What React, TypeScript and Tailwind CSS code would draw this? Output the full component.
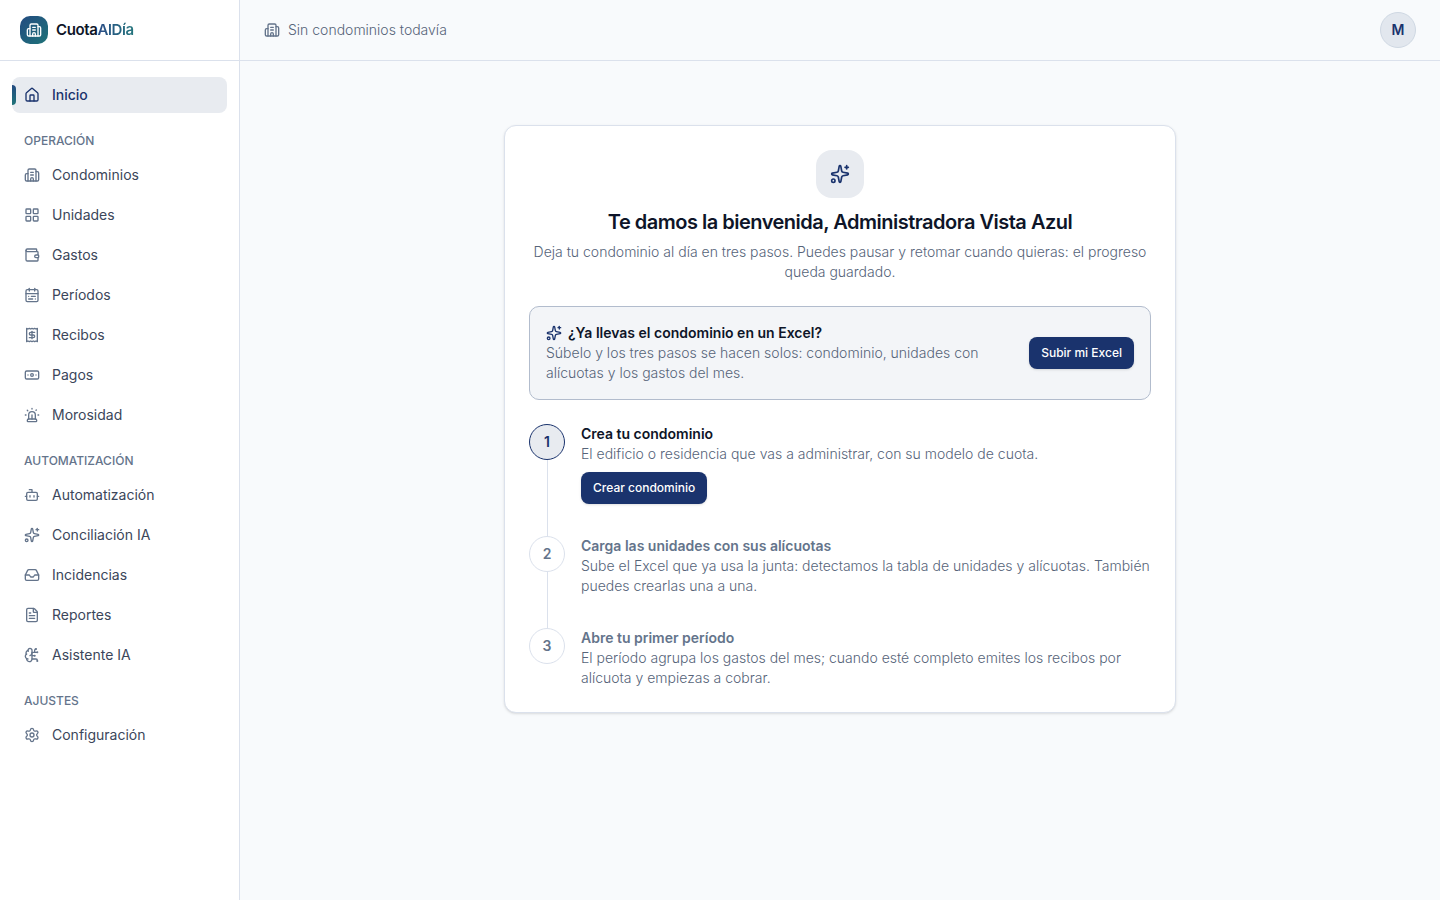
import {
  Banknote,
  Bot,
  BrainCircuit,
  Building2,
  CalendarRange,
  FileText,
  House,
  Inbox,
  LayoutGrid,
  Receipt,
  Settings,
  Siren,
  Sparkles,
  Wallet,
  type LucideIcon,
} from "lucide-react";
import clsx from "clsx";

type NavItem = { label: string; icon: LucideIcon };
type NavSection = { title: string; items: NavItem[] };

const sections: NavSection[] = [
  {
    title: "Operación",
    items: [
      { label: "Condominios", icon: Building2 },
      { label: "Unidades", icon: LayoutGrid },
      { label: "Gastos", icon: Wallet },
      { label: "Períodos", icon: CalendarRange },
      { label: "Recibos", icon: Receipt },
      { label: "Pagos", icon: Banknote },
      { label: "Morosidad", icon: Siren },
    ],
  },
  {
    title: "Automatización",
    items: [
      { label: "Automatización", icon: Bot },
      { label: "Conciliación IA", icon: Sparkles },
      { label: "Incidencias", icon: Inbox },
      { label: "Reportes", icon: FileText },
      { label: "Asistente IA", icon: BrainCircuit },
    ],
  },
  { title: "Ajustes", items: [{ label: "Configuración", icon: Settings }] },
];

const steps = [
  {
    title: "Crea tu condominio",
    text: "El edificio o residencia que vas a administrar, con su modelo de cuota.",
    action: "Crear condominio",
  },
  {
    title: "Carga las unidades con sus alícuotas",
    text: "Sube el Excel que ya usa la junta: detectamos la tabla de unidades y alícuotas. También puedes crearlas una a una.",
  },
  {
    title: "Abre tu primer período",
    text: "El período agrupa los gastos del mes; cuando esté completo emites los recibos por alícuota y empiezas a cobrar.",
  },
];

function NavLink({ label, icon: Icon, active }: NavItem & { active?: boolean }) {
  return (
    <a
      href="#"
      className={clsx(
        "relative flex h-9 items-center gap-3 rounded-lg px-3 text-sm",
        active ? "bg-[#e8ebf0] font-medium text-[#1a336d]" : "text-[#3b465a] hover:bg-slate-50"
      )}
    >
      {active && <span className="absolute left-0 top-2 h-5 w-1 rounded-r-sm bg-linear-to-b from-[#234a80] to-[#1f7378]" />}
      <Icon className={clsx("size-4 shrink-0", !active && "text-[#64748b]")} />
      {label}
    </a>
  );
}

function PrimaryButton({ children }: { children: string }) {
  return (
    <button className="h-8 shrink-0 rounded-lg bg-[#1a336d] px-3 text-xs font-medium text-white shadow-sm hover:opacity-90">
      {children}
    </button>
  );
}

function Muted({ children }: { children: string }) {
  return <p className="text-sm font-light text-[#566479]">{children}</p>;
}

function Sidebar() {
  return (
    <aside className="w-60 shrink-0 border-r border-[#dbe1ec] bg-white">
      <div className="flex items-center gap-2 border-b border-[#dbe1ec] px-5 py-4">
        <span className="flex size-7 items-center justify-center rounded-[10px] bg-linear-to-br from-[#234a80] to-[#1f7378] text-white">
          <Building2 className="size-4" />
        </span>
        <span className="text-[15px] leading-7 font-semibold tracking-tight text-[#0e1528]">
          Cuota<span className="bg-linear-to-r from-[#2a4a86] to-[#24757c] bg-clip-text text-transparent">AlDía</span>
        </span>
      </div>
      <nav className="flex flex-col gap-1 px-3 py-4">
        <NavLink label="Inicio" icon={House} active />
        {sections.map((s) => (
          <div key={s.title} className="flex flex-col gap-1">
            <p className="px-3 pt-4 pb-1 text-xs font-medium text-[#64748b] uppercase">{s.title}</p>
            {s.items.map((item) => (
              <NavLink key={item.label} {...item} />
            ))}
          </div>
        ))}
      </nav>
    </aside>
  );
}

export default function App() {
  return (
    <div className="flex min-h-screen bg-[#f8fafc] font-['Inter',sans-serif] text-[#0e1528]">
      <Sidebar />
      <div className="min-w-0 flex-1">
        <header className="flex items-center justify-between border-b border-[#dbe1ec] px-6 py-3">
          <div className="flex items-center gap-2 text-[#64748b]">
            <Building2 className="size-4" />
            <Muted>Sin condominios todavía</Muted>
          </div>
          <button className="size-9 rounded-full border border-[#cfd8e3] bg-[#e2e7ee] text-sm font-semibold text-[#1a336d]">M</button>
        </header>

        <main className="px-6 py-16">
          <section className="mx-auto max-w-2xl rounded-xl border border-[#dbe1ec] bg-white p-6 shadow-sm">
            <div className="flex flex-col items-center gap-2 text-center">
              <span className="mb-1 flex size-12 items-center justify-center rounded-2xl bg-[#e8ebf0] text-[#1a336d]">
                <Sparkles className="size-5" />
              </span>
              <h1 className="text-xl leading-6 font-semibold tracking-tight">Te damos la bienvenida, Administradora Vista Azul</h1>
              <Muted>
                Deja tu condominio al día en tres pasos. Puedes pausar y retomar cuando quieras: el progreso queda guardado.
              </Muted>
            </div>

            <div className="mt-6 flex items-center justify-between gap-4 rounded-[10px] border border-[#b2bccd] bg-[#f3f5f8] p-4">
              <div className="max-w-md text-sm">
                <h2 className="flex items-center gap-1.5 font-semibold">
                  <Sparkles className="size-4 text-[#1a336d]" />
                  ¿Ya llevas el condominio en un Excel?
                </h2>
                <Muted>Súbelo y los tres pasos se hacen solos: condominio, unidades con alícuotas y los gastos del mes.</Muted>
              </div>
              <PrimaryButton>Subir mi Excel</PrimaryButton>
            </div>

            <ol className="mt-6 text-sm">
              {steps.map((step, i) => (
                <li key={step.title} className="flex gap-4">
                  <div className="flex flex-col items-center">
                    <span
                      className={clsx(
                        "flex size-9 shrink-0 items-center justify-center rounded-full border font-semibold",
                        i === 0 ? "border-[#1a336d] bg-[#e8ebf0] text-[#1a336d]" : "border-[#dbe1ec] bg-white text-[#64748b]"
                      )}
                    >
                      {i + 1}
                    </span>
                    {i < steps.length - 1 && <span className="w-px flex-1 bg-[#dbe1ec]" />}
                  </div>
                  <div className={clsx("min-w-0 flex-1", i < steps.length - 1 && "pb-8")}>
                    <h3 className={clsx("font-semibold", i > 0 && "text-[#64748b]")}>{step.title}</h3>
                    <Muted>{step.text}</Muted>
                    {step.action && (
                      <div className="mt-2 flex">
                        <PrimaryButton>{step.action}</PrimaryButton>
                      </div>
                    )}
                  </div>
                </li>
              ))}
            </ol>
          </section>
        </main>
      </div>
    </div>
  );
}
